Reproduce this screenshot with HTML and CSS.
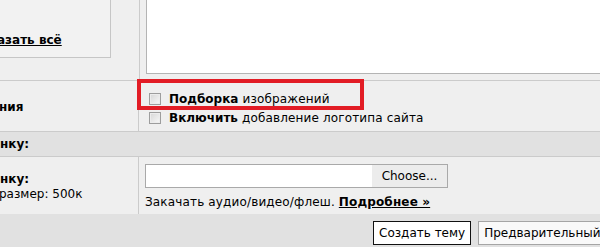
FILE: index.html
```html
<!DOCTYPE html>
<html>
<head>
<meta charset="utf-8">
<link rel="stylesheet" href="styles.css">
</head>
<body>
<div class="form">
  <div class="row r1">
    <div class="lc">
      <div class="box"><a class="link" href="#">азать всё</a></div>
    </div>
    <div class="rc"><textarea class="ta"></textarea></div>
  </div>
  <div class="row r2">
    <div class="lc"><b class="lbl">ния</b></div>
    <div class="rc opts">
      <label class="opt"><input type="checkbox" class="cb"><b>Подборка</b> изображений</label>
      <label class="opt"><input type="checkbox" class="cb"><b>Включить</b> добавление логотипа сайта</label>
    </div>
    <div class="mark"></div>
  </div>
  <div class="hdr"><b>нку:</b></div>
  <div class="row r4">
    <div class="lc info"><b>нку:</b><span>размер: 500к</span></div>
    <div class="rc upload">
      <div class="file"><span class="field"></span><span class="choose">Choose...</span></div>
      <div class="hint">Закачать аудио/видео/флеш. <a href="#" class="more">Подробнее »</a></div>
    </div>
  </div>
  <div class="bar">
    <button class="btn primary">Создать тему</button>
    <button class="btn">Предварительный просмотр</button>
  </div>
</div>
</body>
</html>
```

FILE: styles.css
```css
html, body {
  margin: 0;
  padding: 0;
  background: #efefef;
  overflow: hidden;
  width: 600px;
  height: 247px;
}
.form {
  font-family: "DejaVu Sans", Verdana, sans-serif;
  font-size: 12px;
  color: #000;
  width: 600px;
}
.row {
  display: flex;
  border-bottom: 1px solid #cbcbcb;
  position: relative;
}
.lc {
  width: 139px;
  flex: none;
  border-right: 1px solid #cbcbcb;
  overflow: hidden;
}
.rc {
  flex: 1;
  min-width: 0;
  overflow: hidden;
  padding-left: 6px;
}
.r1 { height: 80px; }
.box {
  margin-left: -20px;
  margin-top: -1px;
  width: 131px;
  height: 59px;
  box-sizing: border-box;
  border: 1px solid #c6c6c6;
  background: #f2f2f2;
  padding: 33px 0 0 16px;
}
.link {
  color: #000;
  font-weight: bold;
  text-decoration: underline;
  line-height: 15px;
  display: block;
}
.ta {
  display: block;
  width: 520px;
  height: 75px;
  margin: -1px 0 0 0;
  box-sizing: border-box;
  border: 1px solid #b4b4b4;
  background: #fff;
  resize: none;
  padding: 0;
}
.r2 { height: 50px; }
.r2 .lc { padding-top: 19px; box-sizing: border-box; }
.lbl { display: block; line-height: 15px; margin-left: -1px; }
.opts {
  display: flex;
  flex-direction: column;
  padding-top: 8px;
}
.opt {
  display: flex;
  align-items: center;
  height: 19px;
  white-space: nowrap;
  letter-spacing: 0.15px;
}
.opt b { margin-right: 4px; letter-spacing: 0; }
.cb {
  appearance: none;
  -webkit-appearance: none;
  width: 12px;
  height: 12px;
  box-sizing: border-box;
  margin: 0 8px 0 4px;
  border: 1px solid #9d9d9d;
  background: linear-gradient(135deg, #d6d6d6, #f8f8f8);
  box-shadow: inset 0 0 0 1px #ececec;
}
.mark {
  position: absolute;
  left: 137px;
  top: -2px;
  width: 227px;
  height: 31px;
  box-sizing: border-box;
  border: 4px solid #e21c25;
}
.hdr {
  height: 23px;
  background: #e1e1e1;
  border-bottom: 1px solid #cbcbcb;
  padding-top: 1px;
  box-sizing: content-box;
}
.hdr b { display: block; line-height: 22px; }
.r4 { height: 57px; border-bottom: none; }
.info {
  display: flex;
  flex-direction: column;
  padding-top: 15px;
  box-sizing: border-box;
  line-height: 15px;
  white-space: nowrap;
}
.info span { margin-left: -1px; }
.upload { padding-top: 7px; }
.file {
  display: flex;
  width: 303px;
  height: 24px;
  box-sizing: border-box;
  border: 1px solid #a9a9a9;
}
.field { width: 226px; background: #fff; }
.choose {
  flex: 1;
  background: #ececec;
  text-align: center;
  line-height: 22px;
}
.hint {
  margin-top: 6px;
  line-height: 16px;
  white-space: nowrap;
  letter-spacing: 0.15px;
}
.more {
  color: #000;
  font-weight: bold;
  text-decoration: underline;
}
.bar {
  height: 34px;
  background: #e1e1e1;
  display: flex;
  gap: 7px;
  padding: 7px 0 0 373px;
  box-sizing: border-box;
  white-space: nowrap;
}
.btn {
  font-family: "DejaVu Sans", Verdana, sans-serif;
  font-size: 12px;
  height: 24px;
  padding: 0 5px;
  color: #000;
  background: #f9f9f9;
  border: 1px solid #a5a5a5;
  flex: none;
}
.btn.primary {
  background: #fff;
  border: 1px solid #111;
}
```
